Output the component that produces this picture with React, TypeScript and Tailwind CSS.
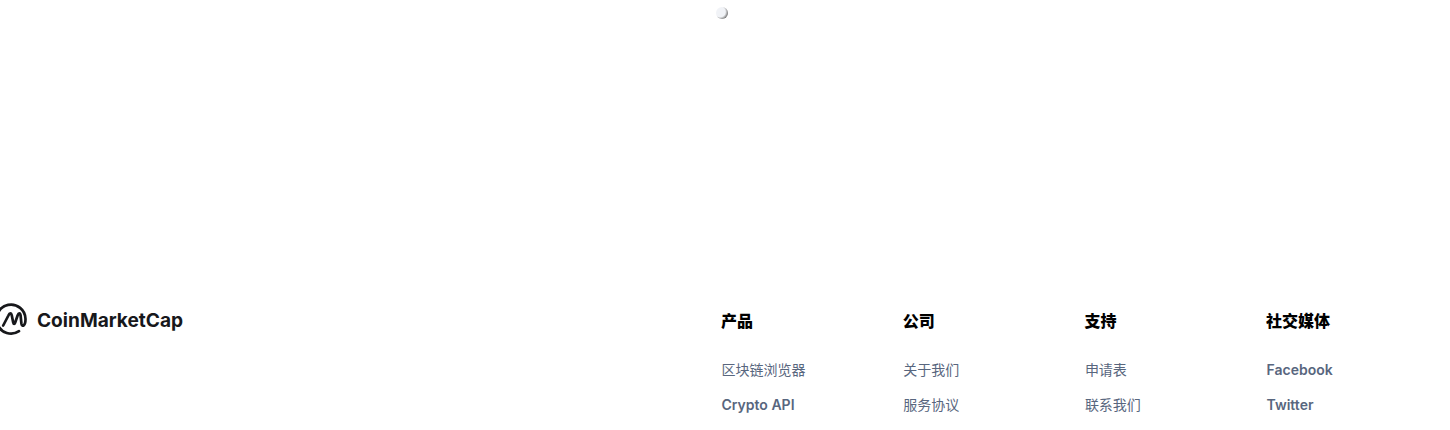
const columns = [
  { title: "产品", links: [{ t: "区块链浏览器" }, { t: "Crypto API", latin: true }] },
  { title: "公司", links: [{ t: "关于我们" }, { t: "服务协议" }] },
  { title: "支持", links: [{ t: "申请表" }, { t: "联系我们" }] },
  { title: "社交媒体", links: [{ t: "Facebook", latin: true }, { t: "Twitter", latin: true }] },
];

function Mark() {
  return (
    <svg width="30" height="34" viewBox="0 0 30 34" fill="none" stroke="#17181b" strokeWidth="2.7" strokeLinecap="round" strokeLinejoin="round" className="shrink-0">
      <path d="M21 28.2A14.5 14.5 0 1 1 27.5 16C27.5 23 24 24.5 23.4 20.5L22.6 12.5C22.2 9.5 20.6 9.5 19.6 12.5L17.2 19.5C16.6 21.5 15.6 21.5 15.2 19.5L13.8 12.5C13.2 9.5 11.6 9.5 10.4 12.5L5.2 22.5" />
    </svg>
  );
}

export default function App() {
  return (
    <div className="w-[1450px] h-[430px] overflow-hidden bg-white font-['Inter','Noto_Sans_CJK_SC',sans-serif]">
      <div className="flex justify-center h-[303px] pt-[7px] pr-[6px]">
        <div className="w-3 h-3 rounded-full bg-[radial-gradient(circle_at_35%_40%,#f1f3f7_48%,#6f6f6f_76%)]" />
      </div>
      <div className="flex">
        <div className="w-[721px] -ml-[2px] flex items-start gap-[9px]">
          <Mark />
          <span className="text-[19.1px] leading-[34px] font-bold text-[#17181b] font-['Inter',sans-serif]">CoinMarketCap</span>
        </div>
        <div className="grid grid-cols-[181.7px_181.7px_181.7px_181.7px] pl-[2px]">
          {columns.map((c) => (
            <div key={c.title}>
              <h3 className="text-base leading-[24px] font-extrabold text-black mt-[6px] mb-[25px]">{c.title}</h3>
              <ul className="flex flex-col gap-[11px] pl-[0.5px]">
                {c.links.map((l) => (
                  <li key={l.t} className={l.latin ? "text-[14px] leading-[24px] font-semibold text-[#58667e]" : "text-[14px] leading-[24px] font-normal text-[#58667e]"}>{l.t}</li>
                ))}
              </ul>
            </div>
          ))}
        </div>
      </div>
    </div>
  );
}
